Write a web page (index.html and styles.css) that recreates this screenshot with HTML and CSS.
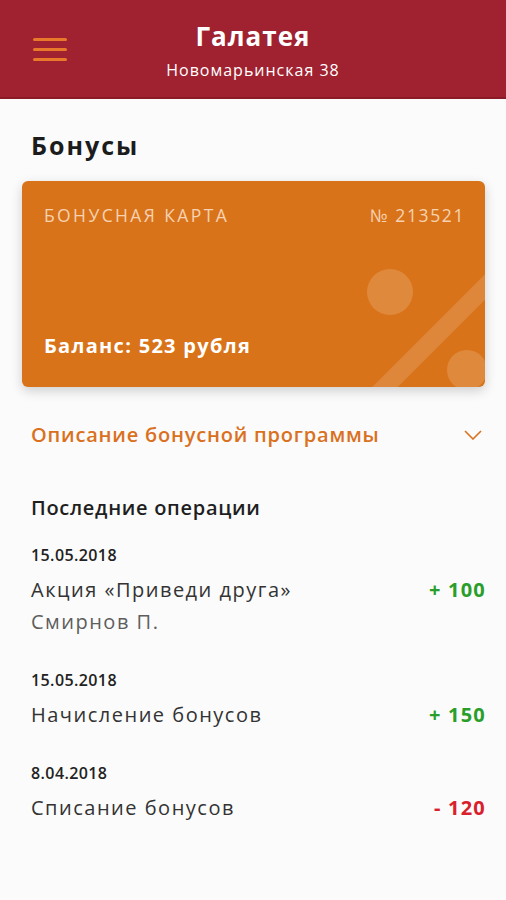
FILE: index.html
```html
<!DOCTYPE html>
<html lang="ru">
<head>
    <meta charset="UTF-8">
    <meta name="viewport" content="width=device-width, initial-scale=1.0">
    <title>Бонусы - Галатея</title>
    <link rel="stylesheet" href="styles.css">
</head>
<body>
    <header class="topbar">
        <button class="menu-btn" aria-label="Меню">
            <span></span><span></span><span></span>
        </button>
        <div class="title">Галатея</div>
        <div class="subtitle">Новомарьинская 38</div>
    </header>

    <main class="page">
        <h1 class="page-title">Бонусы</h1>

        <div class="bonus-card">
            <svg class="card-deco" width="140" height="140" viewBox="0 0 140 140">
                <circle cx="45" cy="45" r="23" fill="rgba(255,255,255,0.16)"/>
                <line x1="30" y1="150" x2="150" y2="30" stroke="rgba(255,255,255,0.14)" stroke-width="18"/>
                <circle cx="122" cy="123" r="20" fill="rgba(255,255,255,0.16)"/>
            </svg>
            <div class="card-head">
                <span>БОНУСНАЯ КАРТА</span>
                <span class="card-num">№ 213521</span>
            </div>
            <div class="card-balance">Баланс: 523 рубля</div>
        </div>

        <div class="program-link">
            <span>Описание бонусной программы</span>
            <svg width="18" height="10" viewBox="0 0 18 10"><polyline points="1,1 9,9 17,1" fill="none" stroke="#d9711f" stroke-width="1.6"/></svg>
        </div>

        <h2 class="section-title">Последние операции</h2>

        <ul class="operations">
            <li class="operation">
                <div class="op-date">15.05.2018</div>
                <div class="op-row">
                    <div class="op-text">
                        <div>Акция «Приведи друга»</div>
                        <div class="op-note">Смирнов П.</div>
                    </div>
                    <div class="op-amount plus">+ 100</div>
                </div>
            </li>
            <li class="operation">
                <div class="op-date">15.05.2018</div>
                <div class="op-row">
                    <div class="op-text">Начисление бонусов</div>
                    <div class="op-amount plus">+ 150</div>
                </div>
            </li>
            <li class="operation">
                <div class="op-date">8.04.2018</div>
                <div class="op-row">
                    <div class="op-text">Списание бонусов</div>
                    <div class="op-amount minus">- 120</div>
                </div>
            </li>
        </ul>
    </main>
</body>
</html>
```

FILE: styles.css
```css
body {
    font-family: "Open Sans", "Noto Sans", sans-serif;
    margin: 0;
    padding: 0;
    background-color: #fbfbfb;
    color: #222;
}
.topbar {
    position: relative;
    height: 97px;
    background-color: #a02230;
    border-bottom: 2px solid #8c1b28;
    color: white;
    text-align: center;
}
.topbar .title {
    padding-top: 21px;
    font-size: 26px;
    line-height: 30px;
    font-weight: 700;
    letter-spacing: 1px;
}
.topbar .subtitle {
    margin-top: 9px;
    font-size: 16px;
    line-height: 20px;
    letter-spacing: 1px;
}
.menu-btn {
    position: absolute;
    left: 33px;
    top: 38px;
    width: 34px;
    height: 23px;
    padding: 0;
    border: none;
    background: none;
    display: flex;
    flex-direction: column;
    justify-content: space-between;
}
.menu-btn span {
    display: block;
    height: 3px;
    border-radius: 2px;
    background-color: #e8792a;
}
.page {
    padding: 0 21px 0 22px;
}
.page-title {
    margin: 31px 0 0 9px;
    font-size: 25px;
    line-height: 30px;
    font-weight: 700;
    letter-spacing: 2px;
    color: #1c1c1c;
}
.bonus-card {
    position: relative;
    overflow: hidden;
    margin-top: 21px;
    height: 206px;
    box-sizing: border-box;
    padding: 24px 22px 29px 22px;
    border-radius: 6px;
    background-color: #d97319;
    box-shadow: 0 4px 12px rgba(0, 0, 0, 0.18);
    display: flex;
    flex-direction: column;
    justify-content: space-between;
}
.card-deco {
    position: absolute;
    right: 0;
    bottom: 0;
}
.card-head {
    position: relative;
    display: flex;
    justify-content: space-between;
    font-size: 17.5px;
    line-height: 20px;
    letter-spacing: 2.4px;
    color: #f6d2b2;
}
.card-num {
    letter-spacing: 1.6px;
    margin-right: -2px;
}
.card-balance {
    position: relative;
    font-size: 20px;
    line-height: 24px;
    font-weight: 700;
    letter-spacing: 1.3px;
    color: white;
}
.program-link {
    margin: 36px 3px 0 9px;
    display: flex;
    justify-content: space-between;
    align-items: center;
    font-size: 20px;
    line-height: 24px;
    font-weight: 600;
    letter-spacing: 0.8px;
    color: #d9711f;
}
.section-title {
    margin: 49px 0 0 9px;
    font-size: 20px;
    line-height: 24px;
    font-weight: 600;
    letter-spacing: 0.7px;
    color: #1f1f1f;
}
.operations {
    list-style: none;
    margin: 25px 0 0 9px;
    padding: 0;
}
.operation {
    margin-bottom: 32px;
}
.op-date {
    font-size: 16px;
    line-height: 20px;
    font-weight: 600;
    letter-spacing: 0.4px;
    color: #222;
}
.op-row {
    margin-top: 9px;
    display: flex;
    justify-content: space-between;
    align-items: flex-start;
}
.op-text {
    font-size: 20px;
    line-height: 32px;
    letter-spacing: 1.5px;
    color: #333;
}
.op-note {
    color: #5e5e5e;
}
.op-amount {
    font-size: 20px;
    line-height: 32px;
    font-weight: 700;
    letter-spacing: 1.2px;
    margin-right: -1px;
}
.plus {
    color: #2a9e2a;
}
.minus {
    color: #d9202c;
}
```
